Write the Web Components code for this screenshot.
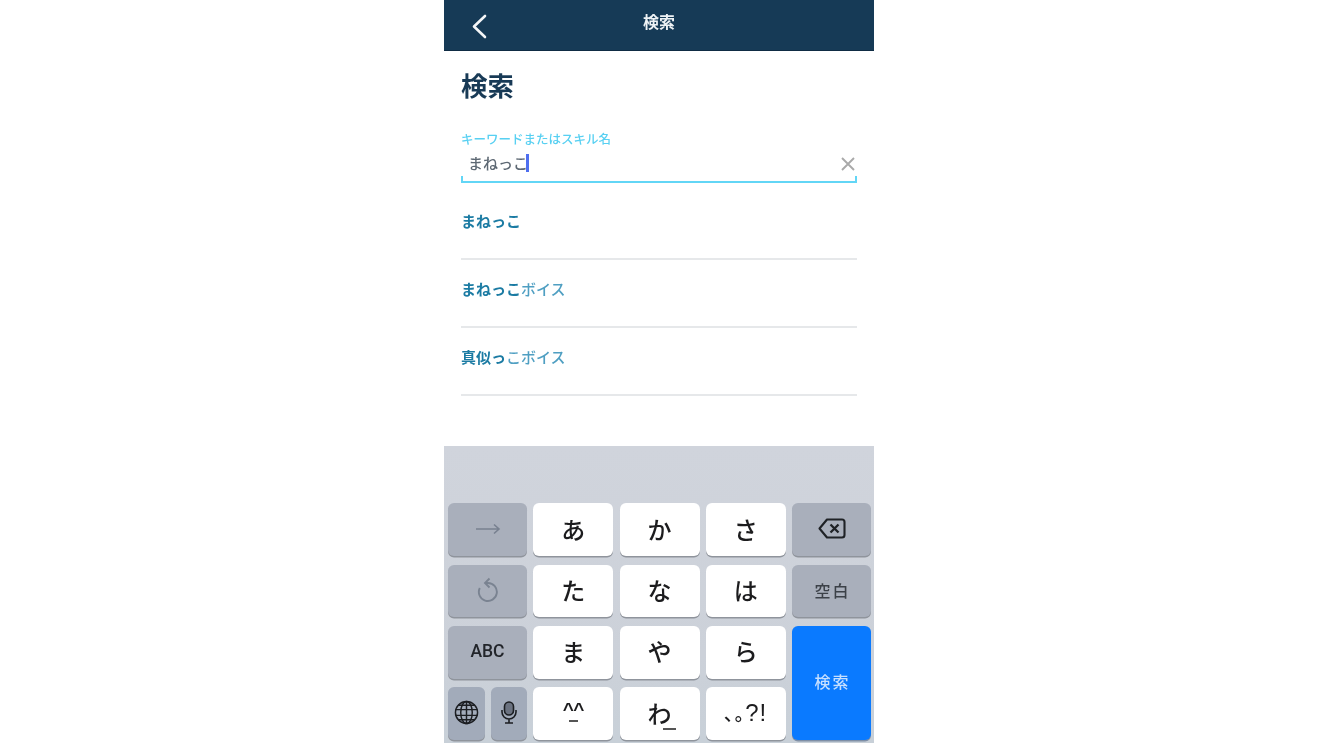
<!DOCTYPE html>
<html lang="ja">
<head>
<meta charset="utf-8">
<title>検索</title>
<style>
  html, body { margin: 0; height: 743px; overflow: hidden; background: #fff; }
  body {
    padding-left: 444px;
    font-family: "Noto Sans CJK JP", "Liberation Sans", sans-serif;
  }
  search-screen { filter: blur(0.45px); }
</style>
</head>
<body>
<search-screen></search-screen>

<script>
const JP = '"Noto Sans CJK JP", "Liberation Sans", sans-serif';

class AppHeader extends HTMLElement {
  constructor() {
    super();
    this.attachShadow({ mode: 'open' }).innerHTML = `
      <style>
        :host {
          display: flex;
          align-items: center;
          justify-content: center;
          position: relative;
          box-sizing: border-box;
          height: 51px;
          padding-bottom: 9px;
          background: #163a56;
          border-bottom: 1px solid #0f2c44;
          color: #eef2f5;
          font: 700 16px ${JP};
        }
        svg { position: absolute; left: 27px; top: 14px; }
      </style>
      <svg width="16" height="25" viewBox="0 0 16 25" fill="none" stroke="#f4f6f8" stroke-width="2.6" stroke-linecap="round" stroke-linejoin="round">
        <path d="M14 2 L3 12.5 L14 23"/>
      </svg>
      <slot></slot>`;
  }
}

class SearchField extends HTMLElement {
  constructor() {
    super();
    this.attachShadow({ mode: 'open' }).innerHTML = `
      <style>
        :host { display: block; position: relative; height: 55px; }
        .label { display: block; height: 21px; line-height: 21px; font-size: 12.5px; font-weight: 500; color: #58d0f2; }
        .box {
          box-sizing: border-box;
          height: 34px;
          padding: 2px 2px 0 7px;
          display: flex;
          justify-content: space-between;
          align-items: flex-start;
          border-bottom: 2px solid #62d6f6;
          background:
            linear-gradient(#62d6f6, #62d6f6) left bottom / 2px 5px no-repeat,
            linear-gradient(#62d6f6, #62d6f6) right bottom / 2px 5px no-repeat;
          font-size: 15px;
          font-weight: 500;
          line-height: 24px;
          color: #5d6873;
        }
        .text { display: flex; align-items: center; }
        .caret { width: 3px; height: 18px; margin-left: -2.5px; background: #4f6ff0; }
        svg { margin: 6px 0 0; }
      </style>
      <span class="label">キーワードまたはスキル名</span>
      <div class="box">
        <span class="text"><slot></slot><span class="caret"></span></span>
        <svg width="14" height="14" viewBox="0 0 14 14" stroke="#a9a9a9" stroke-width="1.9" fill="none"><path d="M1 1 L13 13 M13 1 L1 13"/></svg>
      </div>`;
  }
}

class SuggestRow extends HTMLElement {
  constructor() {
    super();
    this.attachShadow({ mode: 'open' }).innerHTML = `
      <style>
        :host {
          display: block;
          box-sizing: border-box;
          height: 68px;
          padding-top: 18px;
          border-bottom: 2px solid #e6e8ea;
          font-size: 15px;
          font-weight: 500;
          line-height: 22px;
          color: #4f9fc2;
        }
        ::slotted(b) { font-weight: 700; color: #1b7ba3; }
      </style>
      <slot></slot>`;
  }
}

class KbKey extends HTMLElement {
  constructor() {
    super();
    this.attachShadow({ mode: 'open' }).innerHTML = `
      <style>
        :host {
          display: flex;
          align-items: center;
          justify-content: center;
          position: relative;
          min-width: 0;
          box-sizing: border-box;
          padding-bottom: 2px;
          border-radius: 6px;
          background: #fff;
          box-shadow: 0 1.5px 0 #8f949c;
          color: #1c1c1e;
          font-size: 24px;
          font-weight: 500;
          line-height: 1;
        }
        :host([kind=dark]) { background: #a9afbb; font-size: 16px; color: #3c4148; }
        :host([kind=low]) { background: #a2abba; }
        :host([kind=go]) { background: #0a7aff; box-shadow: 0 1.5px 0 #7f8fa6; color: #c6dfff; font-size: 16px; letter-spacing: 2px; grid-row: span 2; padding: 0 0 4px 2px; }
        :host([kind=abc]) { background: #a9afbb; font: 500 17.5px Roboto, "Liberation Sans", sans-serif; color: #22252a; }
      </style>
      <slot></slot>`;
  }
}

class KeyBoard extends HTMLElement {
  constructor() {
    super();
    this.attachShadow({ mode: 'open' }).innerHTML = `
      <style>
        :host {
          display: block;
          height: 297px;
          box-sizing: border-box;
          padding: 57.3px 3px 0 4px;
          background: linear-gradient(#d0d4dc, #ccd1d9 70%, #c8d0d8);
        }
        .grid {
          display: grid;
          grid-template-columns: 79px 80px 80px 80px 79px;
          grid-auto-rows: 52.8px;
          gap: 8.5px 6.25px;
        }
        .pair { display: grid; grid-template-columns: 37px 36px; gap: 6px; }
        svg { display: block; }
        .sp { letter-spacing: 2px; margin-left: 2px; }
        .face { font: 700 19px "Liberation Sans", sans-serif; letter-spacing: -0.5px; margin-top: -5px; }
        .dash { position: absolute; height: 2px; background: #555; }
        .d1 { left: 36px; width: 9px; top: 33px; }
        .d2 { left: 43px; width: 13px; top: 41px; }
        .p { font-size: 19px; letter-spacing: 1px; }
        .q { font: 400 24px "Liberation Sans", sans-serif; letter-spacing: 1px; }
      </style>
      <div class="grid">
        <kb-key kind="dark">
          <svg width="26" height="12" viewBox="0 0 26 12" fill="none" stroke="#788190" stroke-width="1.6"><path d="M1 6 H24 M19 1.5 L24 6 L19 10.5"/></svg>
        </kb-key>
        <kb-key>あ</kb-key>
        <kb-key>か</kb-key>
        <kb-key>さ</kb-key>
        <kb-key kind="dark">
          <svg width="28" height="21" viewBox="0 0 28 21" fill="none" stroke="#1f2226" stroke-width="2.1" stroke-linejoin="round"><path d="M9 1.5 H24 a2.5 2.5 0 0 1 2.5 2.5 V17 a2.5 2.5 0 0 1 -2.5 2.5 H9 L1.5 10.5 Z"/><path d="M12.5 6.5 L20.5 14.5 M20.5 6.5 L12.5 14.5" stroke-width="2.3"/></svg>
        </kb-key>

        <kb-key kind="dark">
          <svg width="22" height="25" viewBox="0 0 22 25" fill="none" stroke="#7a8391" stroke-width="1.9"><path d="M8.5 6 H11 A9 9 0 1 1 2.8 11"/><path d="M12.5 1.5 L8 6 L12.5 10.5"/></svg>
        </kb-key>
        <kb-key>た</kb-key>
        <kb-key>な</kb-key>
        <kb-key>は</kb-key>
        <kb-key kind="dark"><span class="sp">空白</span></kb-key>

        <kb-key kind="abc">ABC</kb-key>
        <kb-key>ま</kb-key>
        <kb-key>や</kb-key>
        <kb-key>ら</kb-key>
        <kb-key kind="go">検索</kb-key>

        <div class="pair">
          <kb-key kind="low">
            <svg width="25" height="25" viewBox="0 0 26 26" fill="none" stroke="#1c1e22" stroke-width="1.5"><circle cx="13" cy="13" r="11.5"/><ellipse cx="13" cy="13" rx="6" ry="11.5"/><path d="M13 1.5 V24.5 M1.5 10 H24.5 M1.5 16 H24.5 M4.5 5.5 H21.5 M4.5 20.5 H21.5"/></svg>
          </kb-key>
          <kb-key kind="low">
            <svg width="16" height="23" viewBox="0 0 16 23" fill="none" stroke="#1c1e22" stroke-width="1.6"><rect x="3.5" y="1" width="9" height="13" rx="4.5" fill="#6b7280"/><path d="M1 9 V11 a7 7 0 0 0 14 0 V9 M8 18 V22 M4 22 H12"/></svg>
          </kb-key>
        </div>
        <kb-key><span class="face">^^</span><span class="dash d1"></span></kb-key>
        <kb-key>わ<span class="dash d2"></span></kb-key>
        <kb-key><span class="p">､｡</span><span class="q">?!</span></kb-key>
      </div>`;
  }
}

class SearchScreen extends HTMLElement {
  constructor() {
    super();
    this.attachShadow({ mode: 'open' }).innerHTML = `
      <style>
        :host {
          display: flex;
          flex-direction: column;
          width: 430px;
          height: 743px;
          overflow: hidden;
          font-family: ${JP};
        }
        main { flex: 1; padding: 0 17px; }
        h1 { margin: 0; padding-top: 15px; height: 62px; box-sizing: border-box; font-size: 26.5px; line-height: 38px; font-weight: 700; color: #183a56; }
        search-field { margin: 15px 0 9px; }
      </style>
      <app-header>検索</app-header>
      <main>
        <h1>検索</h1>
        <search-field>まねっこ</search-field>
        <suggest-row><b>まねっこ</b></suggest-row>
        <suggest-row><b>まねっこ</b>ボイス</suggest-row>
        <suggest-row><b>真似っ</b>こボイス</suggest-row>
      </main>
      <key-board></key-board>`;
  }
}

customElements.define('app-header', AppHeader);
customElements.define('search-field', SearchField);
customElements.define('suggest-row', SuggestRow);
customElements.define('kb-key', KbKey);
customElements.define('key-board', KeyBoard);
customElements.define('search-screen', SearchScreen);
</script>
</body>
</html>
